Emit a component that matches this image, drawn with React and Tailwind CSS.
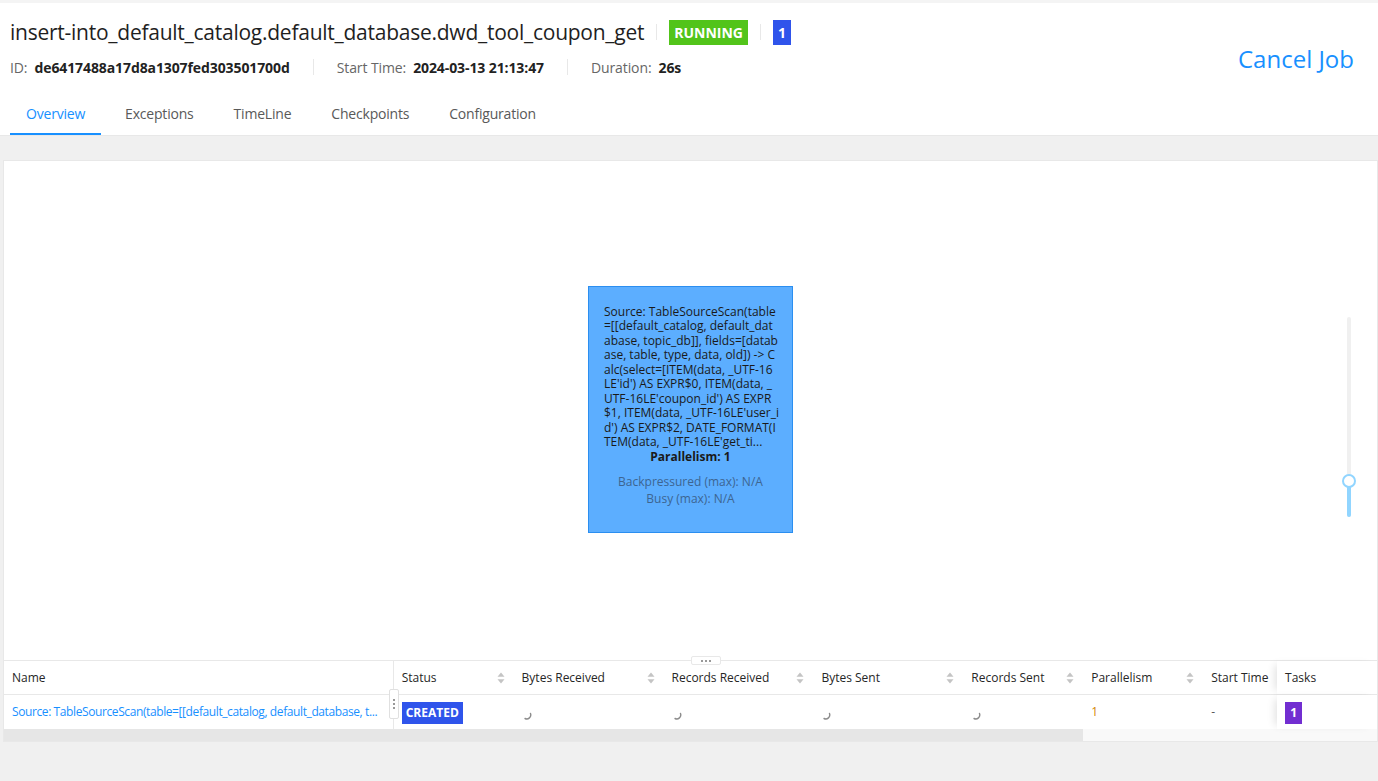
import React from "react";

const font = { fontFamily: '"Open Sans", "Noto Sans", sans-serif' };

function SortIcon() {
  return (
    <svg width="8" height="12" viewBox="0 0 8 12" className="shrink-0">
      <path d="M4 0.5 L7.5 4.8 L0.5 4.8 Z" fill="#c4c4c4" />
      <path d="M4 11.5 L7.5 7.2 L0.5 7.2 Z" fill="#c4c4c4" />
    </svg>
  );
}

function Spinner() {
  return (
    <svg width="10" height="10" viewBox="0 0 10 10">
      <path d="M8.5 3.5 A4 4 0 0 1 3 8.5" stroke="#8c8c8c" strokeWidth="1.4" fill="none" strokeLinecap="round" />
    </svg>
  );
}

function Sep() {
  return <div className="w-px h-[16px] bg-[#e8e8e8] mx-[12px]" />;
}

const cols = [
  { label: "Status", w: "w-[120px]" },
  { label: "Bytes Received", w: "w-[150px]" },
  { label: "Records Received", w: "w-[150px]" },
  { label: "Bytes Sent", w: "w-[150px]" },
  { label: "Records Sent", w: "w-[120px]" },
  { label: "Parallelism", w: "w-[120px]" },
];

const nodeLines = [
  "Source: TableSourceScan(table",
  "=[[default_catalog, default_dat",
  "abase, topic_db]], fields=[datab",
  "ase, table, type, data, old]) -> C",
  "alc(select=[ITEM(data, _UTF-16",
  "LE'id') AS EXPR$0, ITEM(data, _",
  "UTF-16LE'coupon_id') AS EXPR",
  "$1, ITEM(data, _UTF-16LE'user_i",
  "d') AS EXPR$2, DATE_FORMAT(I",
  "TEM(data, _UTF-16LE'get_ti...",
];

export default function App() {
  return (
    <div className="w-[1378px] h-[781px] bg-[#f0f0f0] overflow-hidden" style={font}>
      <div className="h-[3px] bg-[#f4f4f4]" />
      {/* Header */}
      <div className="bg-white border-b border-[#e8e8e8]">
        <div className="flex items-start justify-between pl-[10px] pr-[24px]">
          <div>
            <div className="flex items-center h-[43px] pt-[15px]">
              <div className="text-[21px] leading-[28px] text-[#1f1f1f] tracking-[-0.25px]">
                insert-into_default_catalog.default_database.dwd_tool_coupon_get
              </div>
              <Sep />
              <div className="h-[25px] px-[5px] bg-[#52c41a] text-white text-[14px] font-bold flex items-center">
                RUNNING
              </div>
              <Sep />
              <div className="h-[25px] w-[18px] bg-[#2f54eb] text-white text-[14px] font-bold flex items-center justify-center">
                1
              </div>
            </div>
            <div className="flex items-center h-[20px] mt-[11px] text-[14px] tracking-[-0.1px]">
              <span className="text-[#666]">ID:</span>
              <span className="ml-[7px] font-bold text-[#222]">de6417488a17d8a1307fed303501700d</span>
              <div className="w-px h-[16px] bg-[#e8e8e8] mx-[23px]" />
              <span className="text-[#666]">Start Time:</span>
              <span className="ml-[7px] font-bold text-[#222]">2024-03-13 21:13:47</span>
              <div className="w-px h-[16px] bg-[#e8e8e8] mx-[23px]" />
              <span className="text-[#666]">Duration:</span>
              <span className="ml-[7px] font-bold text-[#222]">26s</span>
            </div>
          </div>
          <div className="pt-[41px] text-[24px] leading-[30px] text-[#1890ff]">Cancel Job</div>
        </div>
        <div className="flex items-end gap-[8px] pl-[10px] mt-[19px] text-[14px] tracking-[-0.2px]">
          {["Overview", "Exceptions", "TimeLine", "Checkpoints", "Configuration"].map((t, i) => (
            <div
              key={t}
              className={
                "px-[16px] pt-[8px] pb-[9px] leading-[20px] border-b-[2px] " +
                (i === 0 ? "text-[#1890ff] border-[#1890ff]" : "text-[#595959] border-transparent")
              }
            >
              {t}
            </div>
          ))}
        </div>
      </div>

      {/* Main panel */}
      <div className="mt-[24px] ml-[3px] w-[1375px] bg-white border border-[#e8e8e8]">
        {/* Graph */}
        <div className="relative h-[499px]">
          <div className="absolute left-[584px] top-[125px] w-[205px] h-[247px] bg-[#5caeff] border border-[#2b8ef0] pt-[18px] px-[15px] text-[12px] leading-[14.45px] text-[#1a1a1a]">
            {nodeLines.map((l, i) => (
              <div key={i} className="whitespace-nowrap">{l}</div>
            ))}
            <div className="text-center font-bold">Parallelism: 1</div>
            <div className="text-center text-[#3d6591] mt-[9px] leading-[17px]">Backpressured (max): N/A</div>
            <div className="text-center text-[#3d6591] leading-[17px]">Busy (max): N/A</div>
          </div>
          {/* slider */}
          <div className="absolute left-[1343px] top-[156px] w-[4px] h-[200px] rounded-full bg-[#f0f0f0]">
            <div className="absolute left-0 bottom-0 w-[4px] h-[36px] rounded-full bg-[#91d5ff]" />
            <div className="absolute left-[-5px] top-[157px] w-[14px] h-[14px] rounded-full bg-white border-[2px] border-[#91d5ff]" />
          </div>
        </div>

        {/* Divider */}
        <div className="relative h-px bg-[#e8e8e8]">
          <div className="absolute left-[687px] top-[-4px] w-[30px] h-[9px] bg-white border border-[#e8e8e8] rounded-[2px] flex items-center justify-center gap-[2px]">
            <div className="w-[2px] h-[2px] bg-[#777] rounded-full" />
            <div className="w-[2px] h-[2px] bg-[#777] rounded-full" />
            <div className="w-[2px] h-[2px] bg-[#777] rounded-full" />
          </div>
        </div>

        {/* Table */}
        <div className="relative text-[12px]">
          <div className="flex h-[34px] border-b border-[#e8e8e8] text-[#262626] items-center">
            <div className="w-[390px] h-full flex items-center px-[8px] border-r border-[#e8e8e8]">Name</div>
            {cols.map((c) => (
              <div key={c.label} className={c.w + " h-full flex items-center justify-between pl-[8px] pr-[9px]"}>
                <span>{c.label}</span>
                <SortIcon />
              </div>
            ))}
            <div className="w-[74px] h-full flex items-center px-[8px] whitespace-nowrap overflow-hidden">Start Time</div>
            <div className="w-[100px] h-full flex items-center px-[8px] bg-white shadow-[-6px_0_8px_-4px_rgba(0,0,0,0.12)]">Tasks</div>
          </div>
          <div className="flex h-[34px] items-center text-[#262626]">
            <div className="relative w-[390px] h-full flex items-center pl-[8px] border-r border-[#e8e8e8] text-[#1890ff]">
              <span className="whitespace-nowrap tracking-[-0.4px]">
                Source: TableSourceScan(table=[[default_catalog, default_database, t...
              </span>
              <div className="absolute right-[-6px] top-[-6px] w-[10px] h-[30px] bg-white border border-[#e0e0e0] rounded-[2px] flex flex-col items-center justify-center gap-[2px]">
                <div className="w-[2px] h-[2px] bg-[#777] rounded-full" />
                <div className="w-[2px] h-[2px] bg-[#777] rounded-full" />
                <div className="w-[2px] h-[2px] bg-[#777] rounded-full" />
              </div>
            </div>
            <div className="w-[120px] h-full flex items-center px-[8px] pt-[1px]">
              <span className="h-[22px] px-[4px] bg-[#2f54eb] text-white font-bold text-[12px] flex items-center">CREATED</span>
            </div>
            <div className="w-[150px] h-full flex items-center px-[8px] pt-[6px]"><Spinner /></div>
            <div className="w-[150px] h-full flex items-center px-[8px] pt-[6px]"><Spinner /></div>
            <div className="w-[150px] h-full flex items-center px-[8px] pt-[6px]"><Spinner /></div>
            <div className="w-[120px] h-full flex items-center px-[8px] pt-[6px]"><Spinner /></div>
            <div className="w-[120px] h-full flex items-center px-[8px] text-[#d48806]">1</div>
            <div className="w-[74px] h-full flex items-center px-[8px] text-[#595959]">-</div>
            <div className="w-[100px] h-full flex items-center px-[8px] pt-[1px] bg-white shadow-[-6px_0_8px_-4px_rgba(0,0,0,0.12)]">
              <span className="h-[22px] w-[17px] bg-[#722ed1] text-white font-bold flex items-center justify-center">1</span>
            </div>
          </div>
          {/* scrollbar */}
          <div className="flex h-[12px] bg-[#f9f9f9]">
            <div className="w-[1079px] h-full bg-[#e6e6e6]" />
          </div>
        </div>
      </div>
    </div>
  );
}
